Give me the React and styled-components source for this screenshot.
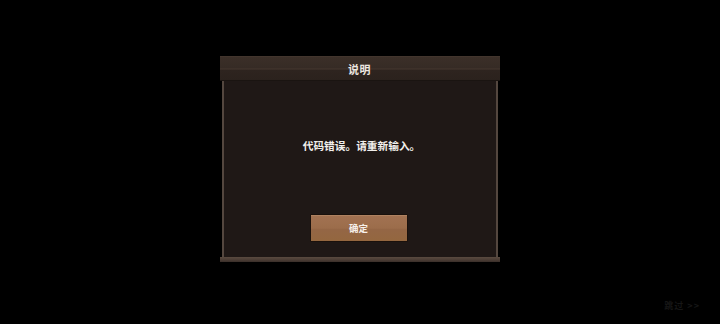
import React from "react";
import styled, { createGlobalStyle } from "styled-components";

const Global = createGlobalStyle`
  html, body { margin: 0; padding: 0; background: #000; }
  body { font-family: "Noto Sans CJK SC", "Noto Sans", sans-serif; }
`;

const Page = styled.div`
  position: relative;
  width: 720px;
  height: 324px;
  background: #000;
  display: flex;
  flex-direction: column;
  align-items: center;
  padding-top: 56px;
  box-sizing: border-box;
  overflow: hidden;
`;

const Dialog = styled.div`
  width: 280px;
  margin-left: -1px;
  display: flex;
  flex-direction: column;
`;

const Header = styled.div`
  height: 25px;
  box-sizing: border-box;
  padding-top: 2px;
  display: flex;
  align-items: center;
  justify-content: center;
  background: linear-gradient(
    180deg,
    #4a3b32 0px,
    #3b2f28 1px,
    #362b25 12px,
    #45372f 13px,
    #2e241f 14px,
    #2b221d 100%
  );
  border-bottom: 1px solid #1a1411;
`;

const Title = styled.span`
  color: #ece6e0;
  font-size: 11px;
  font-weight: 700;
  letter-spacing: 0.5px;
`;

const Body = styled.div`
  height: 176px;
  margin: 0 2px 0 2px;
  box-sizing: border-box;
  background: #1f1816;
  border-left: 2px solid #54473f;
  border-right: 2px solid #54473f;
  display: flex;
  flex-direction: column;
  align-items: center;
  padding-top: 58px;
`;

const Message = styled.p`
  margin: 0;
  padding-left: 4px;
  color: #f2efec;
  font-size: 10.7px;
  line-height: 14px;
  font-weight: 700;
`;

const Button = styled.button`
  margin-top: 61px;
  margin-left: -2px;
  width: 98px;
  height: 28px;
  border: 1px solid #1a110c;
  border-radius: 1px;
  background: linear-gradient(180deg, #a27252 0%, #9c6d4b 50%, #946645 56%, #94673f 100%);
  box-shadow: inset 0 1px 0 rgba(255, 220, 190, 0.15);
  color: #f6f0ea;
  font-family: "Noto Sans CJK SC", sans-serif;
  font-size: 9.5px;
  font-weight: 700;
  display: flex;
  align-items: center;
  justify-content: center;
  padding: 0;
`;

const Footer = styled.div`
  height: 5px;
  background: linear-gradient(180deg, #5a4a40 0%, #4a3c34 60%, #3a2f29 100%);
`;

const Skip = styled.div`
  position: absolute;
  right: 20px;
  bottom: 12px;
  color: #161616;
  font-size: 9px;
  font-weight: 700;
  letter-spacing: 1px;
`;

export default function App() {
  return (
    <>
      <Global />
      <Page>
        <Dialog>
          <Header>
            <Title>说明</Title>
          </Header>
          <Body>
            <Message>代码错误。请重新输入。</Message>
            <Button>确定</Button>
          </Body>
          <Footer />
        </Dialog>
        <Skip>跳过 &gt;&gt;</Skip>
      </Page>
    </>
  );
}
